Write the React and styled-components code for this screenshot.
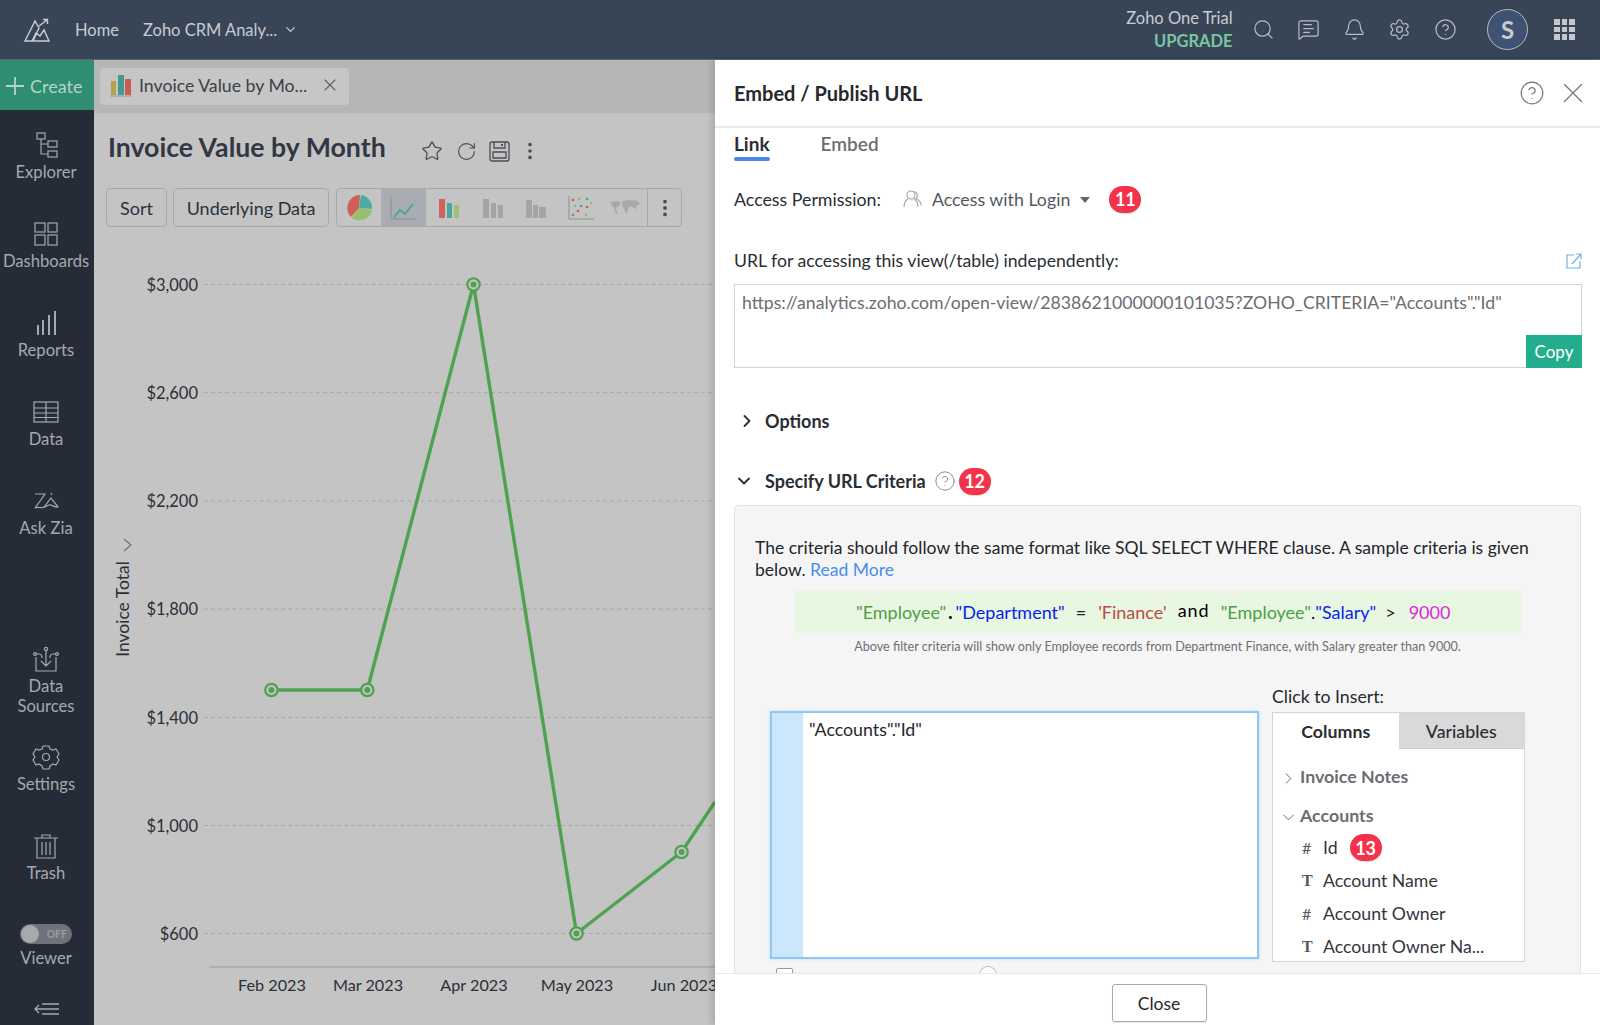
import React from 'react';
import styled, { createGlobalStyle } from 'styled-components';
import { Search, MessageSquareText, Bell, Settings, CircleHelp, X, ChevronDown, ChevronRight, Star, RotateCw, EllipsisVertical } from 'lucide-react';

const Global = createGlobalStyle`
  html, body { margin: 0; padding: 0; background: #fff; }
  * { box-sizing: border-box; }
  body { font-family: Lato, "Noto Sans", sans-serif; }
`;

const Page = styled.div`
  position: relative; width: 1600px; height: 1025px; overflow: hidden;
  display: flex; flex-direction: column; background: #c4c4c4;
`;
const TopBar = styled.header`
  height: 60px; flex: none; display: flex; align-items: center; padding: 0 25px 0 23px;
  background: #374557; color: #c9ccd1; font-size: 16.5px; border-bottom: 1px solid #59626e;
`;
const Logo = styled.svg` width: 28px; height: 26px; flex: none; margin-right: 24px; `;
const TopLink = styled.span` margin-right: 24px; white-space: nowrap; `;
const DropIcon = styled.span` display: flex; margin-left: -18px; color: #c9ccd1; `;
const TopRight = styled.div` margin-left: auto; display: flex; align-items: center; `;
const Trial = styled.div` display: flex; flex-direction: column; align-items: flex-end; margin-right: 19px; line-height: 23px; font-size: 16.5px; `;
const Upgrade = styled.span` color: #7cc5a4; font-weight: 700; `;
const TopIcons = styled.div` display: flex; gap: 22.6px; color: #b9bdc3; align-items: center; `;
const Avatar = styled.div`
  width: 41px; height: 41px; border-radius: 50%; margin-left: 30px; border: 1.5px solid #b9bdc3;
  background: #3f5274; color: #c9ccd1; font-size: 24px; font-weight: 700; display: flex; align-items: center; justify-content: center;
`;
const Waffle = styled.div`
  margin-left: 26px; width: 21px; height: 21px; display: grid; grid-template-columns: repeat(3, 5.6px); gap: 2px;
`;
const WaffleDot = styled.i` display: block; height: 5.6px; background: #c4c7cc; `;

const Body = styled.div` flex: 1; display: flex; min-height: 0; `;
const Sidebar = styled.nav` width: 94px; flex: none; display: flex; flex-direction: column; background: #252b37; color: #a6a9af; align-items: stretch; `;
const CreateBtn = styled.div`
  height: 50px; flex: none; background: #2f8d72; color: #b7d3c9; font-size: 18px; display: flex; align-items: center; padding-left: 5px; gap: 5px; padding-top: 2px;
`;
const NavList = styled.div` display: flex; flex-direction: column; align-items: center; gap: 39px; padding-right: 2px; `;
const TopNav = styled(NavList)` padding-top: 22px; flex: none; gap: 38.9px; `;
const BottomNav = styled(NavList)` margin-top: auto; `;
const NavItem = styled.div`
  display: flex; flex-direction: column; align-items: center; gap: 4px; width: 92px; text-align: center; font-size: 16.6px; line-height: 20px;
  margin-bottom: ${p => p.$mb || 0}px;
`;
const NavIcon = styled.svg` width: 28px; height: 26px; flex: none; display: block; fill: none; stroke: #a6a9af; stroke-width: 1.2; `;
const Toggle = styled.div`
  width: 52px; height: 20px; border-radius: 10px; background: #6f7279; display: flex; align-items: center; justify-content: flex-end; padding: 0 5px;
  font-size: 10.5px; font-weight: 700; color: #9a9ca1; position: relative; margin-top: 2px;
`;
const Knob = styled.i` position: absolute; left: 1px; top: 1px; width: 18px; height: 18px; border-radius: 50%; background: #a8a9ab; `;
const Collapse = styled.svg` width: 26px; height: 14px; flex: none; margin: 34px auto 9px; fill: none; stroke: #a6a9af; stroke-width: 1.3; display: block; `;

const Main = styled.main` flex: 1; min-width: 0; display: flex; flex-direction: column; `;
const TabBar = styled.div` height: 53px; flex: none; background: #b6b6b6; padding: 8px 0 0 6px; `;
const DocTab = styled.div`
  width: 249px; height: 37px; border-radius: 4px; background: #c6c6c6; display: flex; align-items: center; padding: 0 0 3px 10px; font-size: 17.7px; color: #3b4047;
`;
const DocTabName = styled.span` margin-left: 7px; width: 170px; white-space: nowrap; `;
const DocClose = styled.span` display: flex; margin-left: 11px; color: #5d6066; `;
const TitleRow = styled.div` height: 71px; flex: none; display: flex; align-items: center; padding: 0 0 0 14px; `;
const Title = styled.h1` margin: 0 0 3px; font-size: 26.7px; font-weight: 700; color: #313844; white-space: nowrap; width: 313px; `;
const TitleIcons = styled.div` display: flex; align-items: center; gap: 12.5px; color: #4a4e55; margin-bottom: -5px; `;
const TitleMore = styled.span` display: flex; margin-left: -4px; `;
const Toolbar = styled.div` height: 39px; flex: none; margin: 4px 0 0 12px; display: flex; gap: 6px; `;
const ToolBtn = styled.div`
  border: 1.5px solid #a9a9a9; border-radius: 4px; font-size: 18px; color: #2d3138; display: flex; align-items: center; justify-content: center; width: ${p => p.$w}px;
`;
const ChartGroup = styled.div` width: 346px; margin-left: 1px; border: 1.5px solid #a9a9a9; border-radius: 4px; display: flex; overflow: hidden; `;
const ChartCell = styled.div`
  width: 44.3px; display: flex; align-items: center; justify-content: center; background: ${p => p.$on ? '#a9adb2' : 'transparent'};
`;
const MoreCell = styled.div` flex: 1; border-left: 1.5px solid #a9a9a9; display: flex; align-items: center; justify-content: center; color: #4a4e55; `;
const ChartIcon = styled.svg` width: 30px; height: 30px; display: block; `;
const Chart = styled.svg` flex: 1; min-height: 0; display: block; width: 100%; font-family: Lato, sans-serif; `;

const Panel = styled.aside`
  position: absolute; top: 60px; right: 0; bottom: 0; width: 885px; background: #fff; display: flex; flex-direction: column;
  box-shadow: -3px 0 7px rgba(0,0,0,.14); color: #2a2d33;
`;
const PanelHead = styled.div`
  height: 68px; flex: none; display: flex; align-items: center; padding: 0 10px 0 19px; border-bottom: 2px solid #e9e9e9;
`;
const PanelTitle = styled.h2` margin: 0; font-size: 20px; font-weight: 700; color: #25282d; `;
const HeadIcons = styled.div` margin-left: auto; display: flex; align-items: center; gap: 11px; color: #777; `;
const Scroll = styled.div` flex: 1; min-height: 0; overflow: hidden; padding: 0 18px 0 19px; `;
const Tabs = styled.div` display: flex; gap: 51px; height: 34px; `;
const Tab = styled.div`
  height: 33px; padding-top: 2px; font-size: 19px; line-height: 28px; font-weight: ${p => p.$on ? 700 : 600}; color: ${p => p.$on ? '#2a2d33' : '#6a6d72'};
  position: relative;
  &::after { content: ''; display: ${p => p.$on ? 'block' : 'none'}; position: absolute; left: 0; right: 0; bottom: 0; height: 4px; border-radius: 2px; background: #4b87ea; }
`;
const AccessRow = styled.div` margin-top: 22px; height: 30px; display: flex; align-items: center; font-size: 17.8px; `;
const Muted = styled.span` color: #55585e; `;
const PeopleIcon = styled.svg` width: 20px; height: 20px; margin: 0 9px 0 22px; fill: none; stroke: #a0a0a0; stroke-width: 1.1; `;
const Caret = styled.i` width: 0; height: 0; border: 5px solid transparent; border-top: 6px solid #666; border-bottom: 0; margin: 2px 0 0 10px; `;
const Badge = styled.span`
  display: inline-flex; align-items: center; justify-content: center; width: 32px; height: 27px; border-radius: 14px; background: #f4334a; color: #fff;
  font-size: 18px; font-weight: 700; box-shadow: 0 1px 1px rgba(0,0,0,.15); margin-left: ${p => p.$ml || 0}px; flex: none;
`;
const UrlLabel = styled.div` margin-top: 35px; height: 24px; line-height: 24px; font-size: 17.65px; display: flex; justify-content: space-between; align-items: center; `;
const ExtIcon = styled.svg` width: 18px; height: 18px; margin-right: -1px; fill: none; stroke: #6db2ea; stroke-width: 1.2; `;
const UrlBox = styled.div`
  margin-top: 11px; height: 84px; border: 1.5px solid #d4d4d4; padding: 7px; font-size: 17.66px; line-height: 22px; color: #6a6d72; position: relative; white-space: nowrap;
`;
const CopyBtn = styled.div`
  position: absolute; right: -1px; bottom: -1px; width: 56px; height: 33px; background: #22ae8c; color: #fff; font-size: 17px; display: flex; align-items: center; justify-content: center;
`;
const Section = styled.div`
  margin-top: ${p => p.$mt}px; height: ${p => p.$h}px; display: flex; align-items: center; font-size: 18px; font-weight: 700; color: #2a2d33;
`;
const SectionChevron = styled.span` display: flex; width: ${p => 33 - p.$x}px; margin-left: ${p => p.$x - 2}px; color: #2a2d33; `;
const HelpSmall = styled.span` display: flex; margin: 0 3px 0 8px; color: #888; `;
const GreyBox = styled.div`
  margin-top: 10px; width: 847px; height: 600px; background: #f5f5f5; border: 1px solid #e3e3e3; border-radius: 4px; padding: 31px 20px 0;
`;
const Para = styled.p` margin: 0; font-size: 17.55px; line-height: 22px; color: #23262b; `;
const ReadMore = styled.a` color: #4a8cf0; `;
const Sample = styled.div`
  margin: 9px 38px 0 40px; height: 43px; background: #e7f7e1; display: flex; align-items: center; padding-left: 61px; font-size: 18px; white-space: pre;
`;
const Tok = styled.span` color: ${p => p.$c}; margin-left: ${p => p.$ml || 0}px; `;
const AndTok = styled(Tok)` letter-spacing: 1px; margin-bottom: 3px; `;
const DotTok = styled(Tok)` font-weight: 900; `;
const Note = styled.div` margin-top: 6px; height: 16px; text-align: center; font-size: 12.6px; line-height: 16px; color: #6d6f73; `;
const InsertRow = styled.div` margin-top: 32px; margin-left: 15px; display: flex; gap: 13px; align-items: flex-start; `;
const Editor = styled.div`
  margin-top: 24px; width: 489px; height: 248px; flex: none; background: #fff; border: 2px solid #8ec6f5; box-shadow: 0 0 3px #b6dcfb; display: flex;
`;
const Gutter = styled.div` width: 31px; flex: none; background: #cce6fc; `;
const EditorText = styled.div` padding: 5px 6px; font-size: 17.8px; line-height: 22px; color: #25282d; `;
const InsertCol = styled.div` width: 253px; flex: none; `;
const InsertLabel = styled.div` height: 20px; line-height: 20px; font-size: 17.7px; margin-bottom: 5px; color: #25282d; `;
const InsertBox = styled.div` height: 250px; background: #fff; border: 1px solid #d4d4d4; overflow: hidden; `;
const InsertTabs = styled.div` display: flex; height: 36px; `;
const InsertTab = styled.div`
  width: 50%; display: flex; align-items: center; justify-content: center; font-size: 17.8px; font-weight: ${p => p.$on ? 700 : 500};
  background: ${p => p.$on ? '#fff' : '#d9d9d9'}; color: #2a2d33; border-bottom: ${p => p.$on ? 'none' : '1px solid #cfcfcf'};
`;
const Tree = styled.div` padding-top: 10px; `;
const Group = styled.div`
  height: ${p => p.$h}px; margin-bottom: ${p => p.$mb}px; display: flex; align-items: center; font-size: 17.8px; font-weight: 700; color: #6a6d72; padding-left: 8px;
`;
const GroupChevron = styled.span` display: flex; width: 19px; margin-left: -2px; margin-right: 2px; color: #666; padding-top: 5px; `;
const Field = styled.div` height: 33px; display: flex; align-items: center; padding-left: 29px; font-size: 17.7px; color: #33363b; white-space: nowrap; `;
const FieldType = styled.span` width: 21px; flex: none; font-size: 16px; color: #55585e; font-weight: ${p => p.$t ? 700 : 400}; font-family: ${p => p.$t ? '"Liberation Serif", serif' : 'Lato, sans-serif'}; `;
const CutRow = styled.div` margin: 6px 0 0 21px; display: flex; gap: 186px; align-items: flex-start; `;
const CheckStub = styled.i` width: 17px; height: 17px; border: 1.5px solid #999; border-radius: 2px; background: #fff; display: block; `;
const RadioStub = styled.i` width: 18px; height: 18px; border: 1.5px solid #bbb; border-radius: 50%; background: #fff; display: block; margin-top: -2px; `;
const Foot = styled.div` height: 52px; flex: none; border-top: 1px solid #e9e9e9; background: #fff; display: flex; justify-content: center; align-items: flex-start; padding-top: 10px; position: relative; `;
const CloseBtn = styled.div`
  width: 95px; height: 38px; border: 1.5px solid #aaa; border-radius: 3px; font-size: 17.5px; color: #25282d; display: flex; align-items: center; justify-content: center; margin-left: 3px; box-shadow: 0 1px 1px rgba(0,0,0,.1);
`;

const Ic = {
  Explorer: <><rect x="5" y="1" width="8" height="6" /><rect x="16" y="9" width="9" height="6" /><rect x="16" y="19" width="9" height="6" /><path d="M9 7v15h7M9 12h7" /></>,
  Dashboards: <><rect x="3" y="2" width="10" height="9" /><rect x="16" y="2" width="9" height="9" /><rect x="3" y="14" width="10" height="10" /><rect x="16" y="14" width="9" height="10" /></>,
  Reports: <path d="M6 25V15M11 25V10M17 25V5M23 25V1" strokeWidth="2" />,
  Data: <><rect x="2" y="3" width="24" height="20" /><path d="M2 9h24M2 14h24M2 18.5h24M14 3v20" /></>,
  Zia: <path d="M3 6h10L3 20c3-2 6 1 9-1l7-9c2 3 5 6 7 9-4 1-6-3-9-2s-4 3-6 2M19 5l1 2" />,
  Sources: <><path d="M4 11v14h20V11M14 5v15M9 15l5 5 5-5M4 8h3c2 0 3 2 3 4M24 8h-3c-2 0-3 2-3 4" /><circle cx="14" cy="3" r="1.6" /><circle cx="3" cy="8" r="1.4" /><circle cx="25" cy="8" r="1.4" /></>,
  Settings: <><circle cx="14" cy="13" r="3.5" /><path d="M11 2h6l1 3 3 1 3-1 3 5-2 3 2 3-3 5-3-1-3 2-1 3h-6l-1-3-3-2-3 1-3-5 2-3-2-3 3-5 3 1 3-1z" /></>,
  Trash: <><path d="M2 5h24M10 5V2h8v3M5 5v20h18V5M10 9v13M14 9v13M18 9v13" /></>,
};

const points = [[271.4, 690], [367.3, 690], [473.5, 284.5], [576.5, 933.5], [681.6, 852]];
const ticks = [['$3,000', 284.5], ['$2,600', 392.7], ['$2,200', 501], ['$1,800', 609], ['$1,400', 717.5], ['$1,000', 825.5], ['$600', 933.5]];
const months = [['Feb 2023', 272], ['Mar 2023', 368], ['Apr 2023', 474], ['May 2023', 577], ['Jun 2023', 684]];

const Bars = ({ c1, c2, c3 }) => (
  <g><rect x="6" y="6" width="6" height="19" fill={c1} /><rect x="14" y="10" width="5" height="15" fill={c2} /><rect x="21" y="12" width="5" height="13" fill={c3} /></g>
);

export default function App() {
  const navTop = [['Explorer', Ic.Explorer], ['Dashboards', Ic.Dashboards], ['Reports', Ic.Reports], ['Data', Ic.Data], ['Ask Zia', Ic.Zia]];
  const dots = Array.from({ length: 9 });
  const line = [...points, [715, 802]].map(p => p.join(',')).join(' ');
  return (
    <Page>
      <Global />
      <TopBar>
        <Logo viewBox="0 0 28 26" fill="none" stroke="#c9ccd1" strokeWidth="1.4">
          <path d="M2 24L12 4l4 7-6 13zM8 24h18L21 13l-4 6-4-3-4 8M16 9l8-6M20 2.5h4.5V7" />
        </Logo>
        <TopLink>Home</TopLink>
        <TopLink>Zoho CRM Analy...</TopLink>
        <DropIcon><ChevronDown size={15} /></DropIcon>
        <TopRight>
          <Trial><span>Zoho One Trial</span><Upgrade>UPGRADE</Upgrade></Trial>
          <TopIcons>
            <Search size={23} strokeWidth={1.25} />
            <MessageSquareText size={23} strokeWidth={1.25} />
            <Bell size={23} strokeWidth={1.25} />
            <Settings size={23} strokeWidth={1.25} />
            <CircleHelp size={23} strokeWidth={1.25} />
          </TopIcons>
          <Avatar>S</Avatar>
          <Waffle>{dots.map((_, i) => <WaffleDot key={i} />)}</Waffle>
        </TopRight>
      </TopBar>
      <Body>
        <Sidebar>
          <CreateBtn>
            <svg width="20" height="20" viewBox="0 0 20 20" stroke="#b7d3c9" strokeWidth="1.8"><path d="M10 1v18M1 10h18" /></svg>
            Create
          </CreateBtn>
          <TopNav>
            {navTop.map(([label, icon]) => (
              <NavItem key={label}><NavIcon viewBox="0 0 28 26">{icon}</NavIcon>{label}</NavItem>
            ))}
          </TopNav>
          <BottomNav>
            <NavItem $mb={-11}><NavIcon viewBox="0 0 28 26">{Ic.Sources}</NavIcon><span>Data<br />Sources</span></NavItem>
            <NavItem><NavIcon viewBox="0 0 28 26">{Ic.Settings}</NavIcon>Settings</NavItem>
            <NavItem><NavIcon viewBox="0 0 28 26">{Ic.Trash}</NavIcon>Trash</NavItem>
            <NavItem><Toggle><Knob />OFF</Toggle>Viewer</NavItem>
          </BottomNav>
          <Collapse viewBox="0 0 26 14"><path d="M1 7h24M5 3L1 7l4 4M8 2h17M8 12h17" /></Collapse>
        </Sidebar>
        <Main>
          <TabBar>
            <DocTab>
              <svg width="22" height="24" viewBox="0 0 22 24"><rect x="1" y="8" width="5" height="14" fill="#b5a04e" /><rect x="8" y="2" width="6" height="20" fill="#3e9b8e" /><rect x="15" y="6" width="6" height="16" fill="#cc5b54" /><path d="M0 23h22" stroke="#999" /></svg>
              <DocTabName>Invoice Value by Mo...</DocTabName>
              <DocClose><X size={20} strokeWidth={1.3} /></DocClose>
            </DocTab>
          </TabBar>
          <TitleRow>
            <Title>Invoice Value by Month</Title>
            <TitleIcons>
              <Star size={22} strokeWidth={1.4} />
              <RotateCw size={21} strokeWidth={1.3} />
              <svg width="21" height="21" viewBox="0 0 21 21" fill="none" stroke="#4a4e55" strokeWidth="1.3"><path d="M1 3a2 2 0 012-2h15a2 2 0 012 2v15a2 2 0 01-2 2H3a2 2 0 01-2-2z" /><path d="M5 1v6h11V1M4 11h13v6H4z" /><rect x="12" y="3" width="2" height="2" fill="#4a4e55" stroke="none" /></svg>
              <TitleMore><EllipsisVertical size={22} strokeWidth={2} /></TitleMore>
            </TitleIcons>
          </TitleRow>
          <Toolbar>
            <ToolBtn $w={61}>Sort</ToolBtn>
            <ToolBtn $w={156}>Underlying Data</ToolBtn>
            <ChartGroup>
              <ChartCell>
                <ChartIcon viewBox="0 0 30 30">
                  <path d="M15 15L7 24A13 13 0 0 1 16 2z" fill="#cf5f57" /><path d="M15 15L17 2a13 13 0 0 1 11 14z" fill="#4eaaa0" /><path d="M15 15l13 2A13 13 0 0 1 8 25z" fill="#96bf6f" />
                </ChartIcon>
              </ChartCell>
              <ChartCell $on>
                <ChartIcon viewBox="0 0 30 30"><path d="M3 4v22h25" fill="none" stroke="#8b8f93" /><path d="M6 24l6-7 5 4 8-10" fill="none" stroke="#3fa79b" strokeWidth="1.8" /></ChartIcon>
              </ChartCell>
              <ChartCell><ChartIcon viewBox="0 0 30 30"><Bars c1="#d2625a" c2="#4aa69b" c3="#9dc17a" /></ChartIcon></ChartCell>
              <ChartCell><ChartIcon viewBox="0 0 30 30"><Bars c1="#a4a4a4" c2="#a4a4a4" c3="#a4a4a4" /></ChartIcon></ChartCell>
              <ChartCell><ChartIcon viewBox="0 0 30 30"><rect x="5" y="7" width="6" height="18" fill="#a4a4a4" /><path d="M12 25V12h5v13zM18 25V14h7v11z" fill="#a4a4a4" /></ChartIcon></ChartCell>
              <ChartCell>
                <ChartIcon viewBox="0 0 30 30">
                  <path d="M3 3v23h25" fill="none" stroke="#8f8f8f" />
                  {[[7,7,'#c65c55'],[13,6,'#8fb96b'],[21,6,'#4aa69b'],[25,10,'#8fb96b'],[9,13,'#8fb96b'],[15,13,'#4aa69b'],[21,14,'#c65c55'],[12,18,'#c65c55'],[7,22,'#4aa69b'],[20,22,'#8fb96b']].map(([x,y,c]) => <circle key={x+'-'+y} cx={x} cy={y} r="1.3" fill={c} />)}
                </ChartIcon>
              </ChartCell>
              <ChartCell>
                <ChartIcon viewBox="0 0 30 30"><path d="M0 9l8-1 3 2-3 4-2 1 2 7-2-1-2-6zM13 8l5-1 10 1 2 3-4 2 1 3-3-1-2-1-3-1-1 4-2 4-2-5-2-4z" fill="#a9a9a9" /></ChartIcon>
              </ChartCell>
              <MoreCell><EllipsisVertical size={22} strokeWidth={2.2} /></MoreCell>
            </ChartGroup>
          </Toolbar>
          <Chart viewBox="94 227 1506 798" preserveAspectRatio="xMinYMin slice">
            {ticks.map(([t, y]) => (
              <g key={t}>
                <text x="198" y={y + 6} textAnchor="end" fontSize="16.5" fill="#2b2f36">{t}</text>
                <path d={`M204 ${y}H716`} stroke="#a8a8a8" strokeDasharray="4 3" />
              </g>
            ))}
            <path d="M209 967H716" stroke="#9a9a9a" strokeWidth="1.2" />
            {months.map(([m, x]) => <text key={m} x={x} y="991" textAnchor="middle" fontSize="16.2" fill="#2b2f36">{m}</text>)}
            <text transform="translate(129 609) rotate(-90)" textAnchor="middle" fontSize="17.5" fill="#2b2f36">Invoice Total</text>
            <path d="M124 539l7 6-7 6" fill="none" stroke="#6c6c6c" strokeWidth="1.1" />
            <polyline points={line} fill="none" stroke="#4fa24f" strokeWidth="3.4" strokeLinejoin="round" />
            {points.map(([x, y]) => (
              <g key={x}>
                <circle cx={x} cy={y} r="6.2" fill="#c4c4c4" stroke="#4fa24f" strokeWidth="2.2" />
                <circle cx={x} cy={y} r="3" fill="#4fa24f" />
              </g>
            ))}
          </Chart>
        </Main>
      </Body>
      <Panel>
        <PanelHead>
          <PanelTitle>Embed / Publish URL</PanelTitle>
          <HeadIcons>
            <CircleHelp size={26} strokeWidth={1.05} />
            <X size={34} strokeWidth={.9} />
          </HeadIcons>
        </PanelHead>
        <Scroll>
          <Tabs><Tab $on>Link</Tab><Tab>Embed</Tab></Tabs>
          <AccessRow>
            Access Permission:
            <PeopleIcon viewBox="0 0 20 20"><circle cx="8" cy="6" r="4" /><path d="M1 18c0-5 2-7 4-8M15 18c0-5-2-7-4-8M11 2.5a4 4 0 012 7c2 1 5 3 5 7" /></PeopleIcon>
            <Muted>Access with Login</Muted>
            <Caret />
            <Badge $ml={19}>11</Badge>
          </AccessRow>
          <UrlLabel>
            URL for accessing this view(/table) independently:
            <ExtIcon viewBox="0 0 18 18"><path d="M9 3H2v13h13V9M7 12L16 2M11 2h5v5" /></ExtIcon>
          </UrlLabel>
          <UrlBox>
            https://analytics.zoho.com/open-view/2838621000000101035?ZOHO_CRITERIA="Accounts"."Id"
            <CopyBtn>Copy</CopyBtn>
          </UrlBox>
          <Section $mt={41} $h={24}><SectionChevron $x={5}><ChevronRight size={20} strokeWidth={2.2} /></SectionChevron>Options</Section>
          <Section $mt={34} $h={28}>
            <SectionChevron $x={2}><ChevronDown size={20} strokeWidth={2.2} /></SectionChevron>
            Specify URL Criteria
            <HelpSmall><CircleHelp size={22} strokeWidth={1.05} /></HelpSmall>
            <Badge>12</Badge>
          </Section>
          <GreyBox>
            <Para>The criteria should follow the same format like SQL SELECT WHERE clause. A sample criteria is given below. <ReadMore>Read More</ReadMore></Para>
            <Sample>
              <Tok $c="#4e9e47">"Employee"</Tok>
              <DotTok $c="#000" $ml={2}>.</DotTok>
              <Tok $c="#0a1fe8" $ml={3}>"Department"</Tok>
              <Tok $c="#222" $ml={11}>=</Tok>
              <Tok $c="#bb4b47" $ml={12}>'Finance'</Tok>
              <AndTok $c="#000" $ml={11}>and</AndTok>
              <Tok $c="#4e9e47" $ml={11}>"Employee"</Tok>
              <Tok $c="#000">.</Tok>
              <Tok $c="#0a1fe8">"Salary"</Tok>
              <Tok $c="#222" $ml={9}>&gt;</Tok>
              <Tok $c="#e01fe0" $ml={13}>9000</Tok>
            </Sample>
            <Note>Above filter criteria will show only Employee records from Department Finance, with Salary greater than 9000.</Note>
            <InsertRow>
              <Editor>
                <Gutter />
                <EditorText>"Accounts"."Id"</EditorText>
              </Editor>
              <InsertCol>
                <InsertLabel>Click to Insert:</InsertLabel>
                <InsertBox>
                  <InsertTabs><InsertTab $on>Columns</InsertTab><InsertTab>Variables</InsertTab></InsertTabs>
                  <Tree>
                    <Group $h={34} $mb={5}><GroupChevron><ChevronRight size={19} strokeWidth={1.2} /></GroupChevron>Invoice Notes</Group>
                    <Group $h={33} $mb={0}><GroupChevron><ChevronDown size={19} strokeWidth={1.2} /></GroupChevron>Accounts</Group>
                    <Field><FieldType>#</FieldType>Id<Badge $ml={12}>13</Badge></Field>
                    <Field><FieldType $t>T</FieldType>Account Name</Field>
                    <Field><FieldType>#</FieldType>Account Owner</Field>
                    <Field><FieldType $t>T</FieldType>Account Owner Na...</Field>
                  </Tree>
                </InsertBox>
              </InsertCol>
            </InsertRow>
            <CutRow><CheckStub /><RadioStub /></CutRow>
          </GreyBox>
        </Scroll>
        <Foot><CloseBtn>Close</CloseBtn></Foot>
      </Panel>
    </Page>
  );
}
